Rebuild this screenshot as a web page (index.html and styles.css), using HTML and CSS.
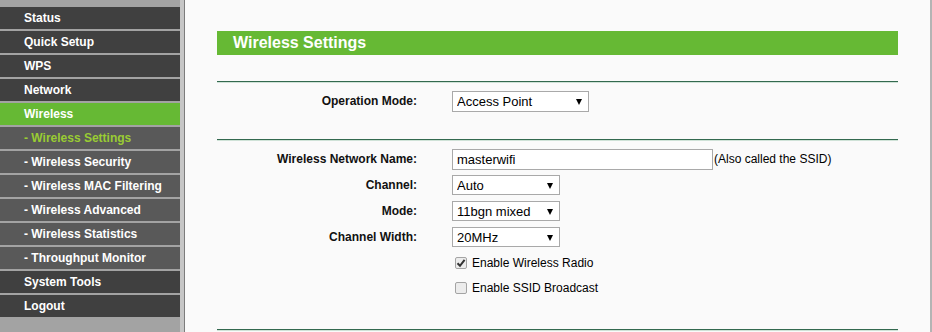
FILE: index.html
```html
<!DOCTYPE html>
<html lang="en">
<head>
    <meta charset="UTF-8">
    <meta name="viewport" content="width=device-width, initial-scale=1.0">
    <title>Wireless Settings</title>
    <link rel="stylesheet" href="styles.css">
</head>
<body>
    <div class="frame">
        <nav class="menu">
            <a class="item">Status</a>
            <a class="item">Quick Setup</a>
            <a class="item">WPS</a>
            <a class="item">Network</a>
            <a class="item active">Wireless</a>
            <a class="item sub current">- Wireless Settings</a>
            <a class="item sub">- Wireless Security</a>
            <a class="item sub">- Wireless MAC Filtering</a>
            <a class="item sub">- Wireless Advanced</a>
            <a class="item sub">- Wireless Statistics</a>
            <a class="item sub">- Throughput Monitor</a>
            <a class="item">System Tools</a>
            <a class="item">Logout</a>
        </nav>
        <div class="divider"></div>

        <main class="content">
            <div class="title-bar">Wireless Settings</div>

            <div class="section first">
                <div class="row">
                    <label class="label">Operation Mode:</label>
                    <div class="field">
                        <span class="select-wrap op">
                            <select><option>Access Point</option></select>
                        </span>
                    </div>
                </div>
            </div>

            <div class="section">
                <div class="row">
                    <label class="label">Wireless Network Name:</label>
                    <div class="field">
                        <input class="text-input" type="text" value="masterwifi">
                        <span class="hint">(Also called the SSID)</span>
                    </div>
                </div>
                <div class="row">
                    <label class="label">Channel:</label>
                    <div class="field">
                        <span class="select-wrap"><select><option>Auto</option></select></span>
                    </div>
                </div>
                <div class="row">
                    <label class="label">Mode:</label>
                    <div class="field">
                        <span class="select-wrap"><select><option>11bgn mixed</option></select></span>
                    </div>
                </div>
                <div class="row">
                    <label class="label">Channel Width:</label>
                    <div class="field">
                        <span class="select-wrap"><select><option>20MHz</option></select></span>
                    </div>
                </div>
                <div class="row check-row">
                    <span></span>
                    <label class="check">
                        <span class="box checked">
                            <svg width="10" height="10" viewBox="0 0 10 10"><path d="M1.5 5.2 L4 7.8 L8.6 1.8" fill="none" stroke="#333" stroke-width="2"/></svg>
                        </span>
                        Enable Wireless Radio
                    </label>
                </div>
                <div class="row check-row">
                    <span></span>
                    <label class="check">
                        <span class="box"></span>
                        Enable SSID Broadcast
                    </label>
                </div>
            </div>

            <div class="section-end"></div>
        </main>
        <div class="edge"></div>
    </div>
</body>
</html>
```

FILE: styles.css
```css
* {
    margin: 0;
    padding: 0;
    box-sizing: border-box;
}

body {
    font-family: 'Liberation Sans', Arial, sans-serif;
    background-color: #fafafa;
    color: #000;
    height: 332px;
    overflow: hidden;
}

.frame {
    display: flex;
    height: 332px;
}

/* Left menu */
.menu {
    width: 180px;
    flex-shrink: 0;
    background-color: #a3a3a3;
    padding-top: 7px;
    display: flex;
    flex-direction: column;
    gap: 2px;
}

.item {
    display: block;
    height: 22px;
    line-height: 22px;
    padding-left: 24px;
    background-color: #404040;
    color: #fff;
    font-size: 12px;
    font-weight: bold;
    white-space: nowrap;
}

.item.sub {
    background-color: #595959;
}

.item.active {
    background-color: #66b934;
}

.item.current {
    color: #99cc33;
}

.divider {
    width: 5px;
    flex-shrink: 0;
    background-color: #c6c6c6;
    border-right: 1px solid #7c7c7c;
}

.edge {
    width: 2px;
    flex-shrink: 0;
    background-color: #b4b4b4;
}

/* Main panel */
.content {
    flex: 1;
    padding: 31px 32px 0 32px;
}

.title-bar {
    height: 24px;
    line-height: 24px;
    background-color: #66b934;
    color: #fff;
    font-size: 16px;
    font-weight: bold;
    padding-left: 16px;
    margin-bottom: 26px;
}

.section {
    border-top: 1px solid #33694f;
    box-shadow: inset 0 1px 0 #cfe2d7;
    padding: 6px 0 29px 0;
}

.section.first {
    padding-bottom: 25px;
}

.section-end {
    border-top: 1px solid #33694f;
    height: 3px;
    box-shadow: inset 0 1px 0 #cfe2d7;
}

.row {
    display: grid;
    grid-template-columns: 200px 1fr;
    column-gap: 35px;
    align-items: center;
    height: 26px;
}

.row.check-row {
    height: 25px;
}

.label {
    text-align: right;
    font-size: 12px;
    font-weight: bold;
    color: #111;
}

.field {
    display: flex;
    align-items: center;
}

.text-input {
    width: 261px;
    height: 21px;
    border: 1px solid #a9a9a9;
    background-color: #fff;
    font-family: 'Liberation Sans', Arial, sans-serif;
    font-size: 13px;
    padding: 0 4px;
    color: #000;
    outline: none;
}

.hint {
    font-size: 12px;
    margin-left: 1px;
}

.select-wrap {
    position: relative;
    display: inline-block;
}

.select-wrap select {
    appearance: none;
    -webkit-appearance: none;
    width: 108px;
    height: 20px;
    border: 1px solid #a9a9a9;
    border-radius: 0;
    background-color: #fff;
    font-family: 'Liberation Sans', Arial, sans-serif;
    font-size: 13px;
    padding: 0 4px;
    color: #000;
    outline: none;
}

.select-wrap.op select {
    width: 137px;
    height: 21px;
}

.select-wrap::after {
    content: '';
    position: absolute;
    right: 7px;
    top: 8px;
    border-left: 3px solid transparent;
    border-right: 3px solid transparent;
    border-top: 6px solid #000;
    pointer-events: none;
}

.check {
    display: flex;
    align-items: center;
    gap: 5px;
    font-size: 12px;
    padding-left: 3px;
}

.box {
    width: 12px;
    height: 12px;
    border: 1px solid #a4a4a4;
    border-radius: 2px;
    background-color: #ececec;
    display: flex;
    align-items: center;
    justify-content: center;
}
```
